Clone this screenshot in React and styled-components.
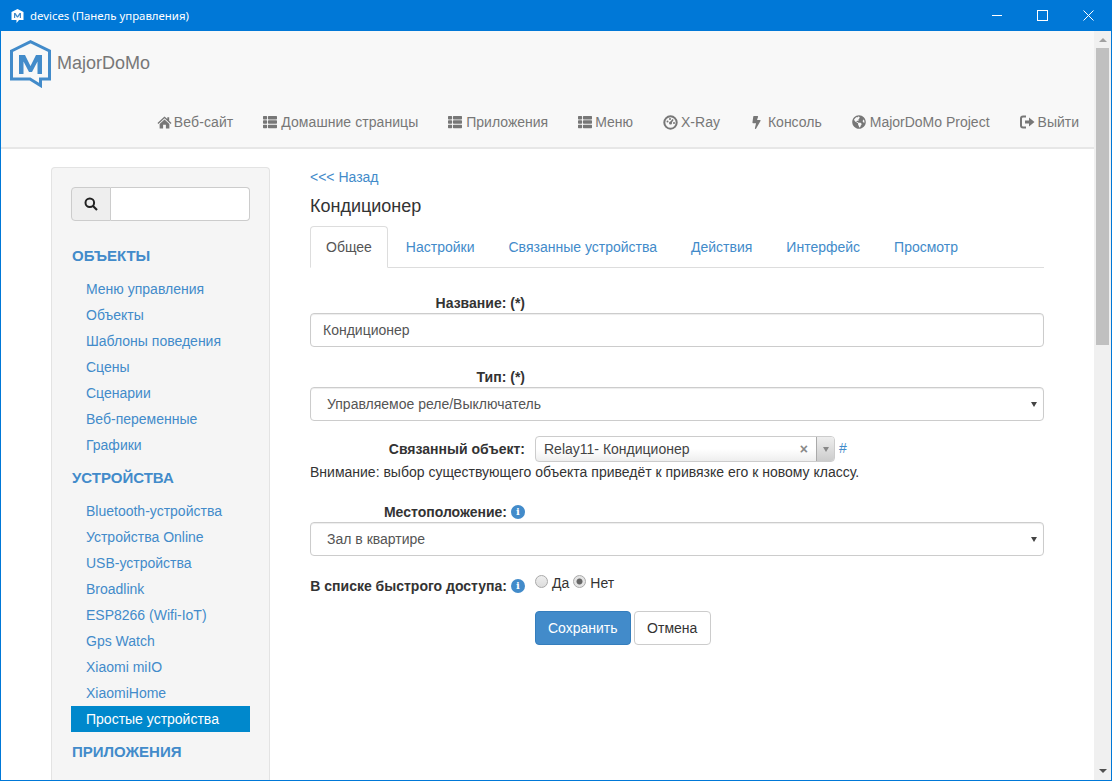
import React from 'react';
import styled, { createGlobalStyle } from 'styled-components';
import { FaThList, FaBolt, FaGlobeAmericas } from 'react-icons/fa';

const Global = createGlobalStyle`
  html, body { margin: 0; padding: 0; height: 100%; overflow: hidden; }
  body { font-family: "Liberation Sans", Arial, sans-serif; font-size: 14px; line-height: 20px; color: #333; background: #fff; }
  * { box-sizing: border-box; }
  a { text-decoration: none; color: #428bca; }
`;

const Win = styled.div`
  width: 1112px; height: 781px; display: flex; flex-direction: column;
  border: 1px solid #0078d7; border-top: 0; overflow: hidden;
`;
const TitleBar = styled.div`
  height: 31px; flex: none; background: #0078d7; color: #fff; display: flex; align-items: center;
  margin: 0 -1px; padding: 0 1px 0 11px; font-family: "Noto Sans", "Open Sans", sans-serif; font-size: 11.4px;
`;
const TitleText = styled.span` margin-left: 6px; flex: 1; `;
const WinBtn = styled.div` width: 46px; height: 31px; display: flex; align-items: center; justify-content: center; `;
const Main = styled.div` flex: 1; display: flex; min-height: 0; `;
const Page = styled.div` flex: 1; min-width: 0; overflow: hidden; `;
const ScrollBar = styled.div`
  width: 17px; flex: none; background: #f0f0f0; display: flex; flex-direction: column; align-items: center;
`;
const ArrowUp = styled.div` width: 0; height: 0; margin-top: 7px; border: 4px solid transparent; border-top: 0; border-bottom: 4px solid #a0a0a0; `;
const Thumb = styled.div` width: 13px; height: 297px; background: #c0c0c0; margin-top: 6px; flex: none; `;
const ArrowDown = styled.div` width: 0; height: 0; margin-top: auto; margin-bottom: 7px; border: 4px solid transparent; border-bottom: 0; border-top: 4px solid #505050; `;

const Navbar = styled.div` height: 118px; background: #f8f8f8; border-bottom: 2px solid #e7e7e7; display: flex; flex-direction: column; `;
const Brand = styled.div` display: flex; height: 60px; padding: 9px 0 0 9px; `;
const BrandName = styled.span` font-size: 18px; color: #777; margin: 11px 0 0 5px; line-height: 24px; `;
const NavList = styled.div` display: flex; justify-content: flex-end; margin-top: 20px; `;
const NavItem = styled.a`
  display: flex; align-items: center; color: #777; padding: 0 15px; height: 22px; white-space: nowrap; line-height: 20px;
  letter-spacing: ${p => p.$ls || 0}px;
  svg { margin-right: ${p => p.$gap ?? 3}px; flex: none; }
`;

const Body = styled.div` display: flex; padding: 18px 0 0 50px; align-items: flex-start; `;
const Sidebar = styled.div`
  width: 219px; flex: none; background: #f5f5f5; border: 1px solid #e3e3e3; border-bottom: 0; border-radius: 4px 4px 0 0; padding: 19px 19px 12px; height: 640px;
`;
const SearchGroup = styled.div` display: flex; height: 34px; margin-bottom: 22px; `;
const SearchAddon = styled.div` width: 40px; background: #eee; border: 1px solid #ccc; border-radius: 4px 0 0 4px; display: flex; align-items: center; justify-content: center; `;
const SearchInput = styled.div` flex: 1; background: #fff; border: 1px solid #ccc; border-left: 0; border-radius: 0 4px 4px 0; `;
const NavHead = styled.div` font-size: 15px; font-weight: 700; color: #428bca; line-height: 20px; padding: 3px 1px; margin-bottom: 7px; `;
const SideLink = styled.a`
  display: block; height: 26px; line-height: 20px; padding: 3px 15px; color: ${p => p.$active ? '#fff' : '#428bca'}; background: ${p => p.$active ? '#0088cc' : 'transparent'};
`;
const SideGroup = styled.div` margin-bottom: 7px; `;

const Content = styled.div` width: 734px; margin-left: 40px; flex: none; `;
const Back = styled.a` display: block; line-height: 20px; `;
const Heading = styled.h4` margin: 9px 0 0; font-size: 18px; font-weight: 400; line-height: 20px; color: #333; `;
const Tabs = styled.div` display: flex; height: 42px; margin-top: 10px; border-bottom: 1px solid #ddd; `;
const Tab = styled.a`
  height: 42px; padding: 10px 15px; margin-right: 2px; line-height: 20px; border: 1px solid ${p => p.$active ? '#ddd' : 'transparent'}; border-bottom-color: ${p => p.$active ? '#fff' : 'transparent'};
  border-radius: 4px 4px 0 0; background: ${p => p.$active ? '#fff' : 'transparent'}; color: ${p => p.$active ? '#555' : '#428bca'};
`;
const Label = styled.div` width: 215px; font-weight: 700; line-height: 20px; margin-top: ${p => p.$mt || 0}px; color: #333; white-space: nowrap; display: flex; justify-content: flex-end; align-items: center; gap: 4px; flex: none; `;
const Control = styled.div`
  height: 34px; border: 1px solid #ccc; border-radius: 4px; background: #fff; color: #555; line-height: 32px; padding: 0 12px; position: relative;
  box-shadow: inset 0 1px 1px rgba(0,0,0,.075);
`;
const SelectControl = styled(Control)` padding-left: 16px; `;
const Caret = styled.span` position: absolute; right: 6px; top: 14px; width: 0; height: 0; border: 3.5px solid transparent; border-bottom: 0; border-top: 5px solid #444; `;
const InlineRow = styled.div` display: flex; margin-top: ${p => p.$mt || 0}px; align-items: center; `;
const Select2 = styled.div`
  width: 300px; height: 26px; margin-left: 10px; border: 1px solid #ccc; border-radius: 4px; display: flex; line-height: 24px; padding-left: 8px; color: #444;
  background: linear-gradient(#fff 50%, #eee); overflow: hidden; flex: none;
`;
const S2Text = styled.span` flex: 1; `;
const S2Clear = styled.span` font-weight: 700; color: #888; font-size: 14px; margin-right: 8px; `;
const S2Arrow = styled.div` width: 18px; background: linear-gradient(#eee, #ccc); border-left: 1px solid #aaa; display: flex; align-items: center; justify-content: center; `;
const S2Tri = styled.span` width: 0; height: 0; border: 3px solid transparent; border-bottom: 0; border-top: 5px solid #888; `;
const Hash = styled.a` margin: -3px 0 0 4px; `;
const Note = styled.div` line-height: 20px; `;
const Info = styled.span`
  width: 14px; height: 14px; border-radius: 50%; background: #428bca; color: #fff; font-size: 10px; font-weight: 700; line-height: 14px; text-align: center; display: inline-block; flex: none; font-family: "DejaVu Serif", serif;
`;
const Radios = styled.div` display: flex; align-items: center; margin-left: 10px; margin-top: -6px; color: #333; `;
const Radio = styled.span`
  width: 13px; height: 13px; border-radius: 50%; border: 1px solid #a9a9a9; background: ${p => p.$on ? 'radial-gradient(circle, #666 0 2.6px, #e4e4e4 3.4px)' : 'linear-gradient(#eee,#ddd)'}; display: inline-block; margin: -4px 4px 0 ${p => p.$ml || 0}px;
`;
const Actions = styled.div` display: flex; margin: 15px 0 0 225px; gap: 3px; `;
const Btn = styled.a`
  height: 34px; padding: 6px ${p => p.$primary ? 12 : 13}px 6px ${p => p.$primary ? 12 : 12.5}px; border-radius: 4px; line-height: 20px; border: 1px solid ${p => p.$primary ? '#357ebd' : '#ccc'}; background: ${p => p.$primary ? '#428bca' : '#fff'}; color: ${p => p.$primary ? '#fff' : '#333'};
`;

const Logo = () => (
  <svg width="42" height="48" viewBox="0 0 42 48" style={{ flex: 'none' }}>
    <path d="M1.5 11 L20.5 1.7 L39.5 11 V39 H30.5 V45.5 L20 39 H1.5 Z" fill="none" stroke="#428bca" strokeWidth="3" />
    <path d="M9 34 V15 H15 L20.5 26 L26 15 H32 V34 H27.5 V21.5 L22 32 H19 L13.5 21.5 V34 Z" fill="#428bca" />
  </svg>
);
const Home = () => (
  <svg width="15" height="15" viewBox="0 0 16 15"><path d="M8 1 L0.5 8 L1.5 9 L8 3 L14.5 9 L15.5 8 L13 5.6 V2 H11 V3.8 Z" fill="#777" /><path d="M2.8 9 L8 4.2 L13.2 9 V14 H9.5 V10 H6.5 V14 H2.8 Z" fill="#777" /></svg>
);
const Dash = () => (
  <svg width="15" height="15" viewBox="0 0 15 15"><circle cx="7.5" cy="7.5" r="6.2" fill="none" stroke="#777" strokeWidth="2" /><path d="M7.5 8 L10 4.5" stroke="#777" strokeWidth="1.5" /><circle cx="4.5" cy="6.5" r="1" fill="#777" /><circle cx="7" cy="4" r="1" fill="#777" /><circle cx="11" cy="8" r="1" fill="#777" /><circle cx="7.5" cy="8" r="1.5" fill="#777" /></svg>
);
const LogOut = () => (
  <svg width="15" height="14" viewBox="0 0 15 14"><path d="M6 1.5 H3 Q1 1.5 1 3.5 V10.5 Q1 12.5 3 12.5 H6" fill="none" stroke="#777" strokeWidth="2" /><path d="M5 5.5 H9 V2.5 L14.5 7 L9 11.5 V8.5 H5 Z" fill="#777" /></svg>
);
const Search = () => (
  <svg width="14" height="14" viewBox="0 0 14 14"><circle cx="5.8" cy="5.8" r="4.3" fill="none" stroke="#222" strokeWidth="2" /><path d="M9 9 L13 13" stroke="#222" strokeWidth="2.2" /></svg>
);

const objects = ['Меню управления','Объекты','Шаблоны поведения','Сцены','Сценарии','Веб-переменные','Графики'];
const devices = ['Bluetooth-устройства','Устройства Online','USB-устройства','Broadlink','ESP8266 (Wifi-IoT)','Gps Watch','Xiaomi miIO','XiaomiHome'];

export default function App() {
  return (
    <Win>
      <Global />
      <TitleBar>
        <svg width="13" height="14" viewBox="0 0 13 14"><path d="M0.5 3 L6.5 0 L12.5 3 V11 H8 L5.5 14 V11 H0.5 Z" fill="#fff" /><path d="M3 9 V4 H4.5 L6.5 7 L8.5 4 H10 V9 H8.8 V6 L7 8.5 H6 L4.2 6 V9 Z" fill="#428bca" /></svg>
        <TitleText>devices (Панель управления)</TitleText>
        <WinBtn><svg width="14" height="11"><path d="M3 5.5 H13" stroke="#fff" /></svg></WinBtn>
        <WinBtn><svg width="11" height="11"><rect x=".5" y=".5" width="10" height="10" fill="none" stroke="#fff" /></svg></WinBtn>
        <WinBtn><svg width="11" height="11"><path d="M.5 .5 L10.5 10.5 M10.5 .5 L.5 10.5" stroke="#fff" /></svg></WinBtn>
      </TitleBar>
      <Main>
        <Page>
          <Navbar>
            <Brand>
              <Logo />
              <BrandName>MajorDoMo</BrandName>
            </Brand>
            <NavList>
              <NavItem $gap={2} $ls={0.1}><Home />Веб-сайт</NavItem>
              <NavItem $gap={4} $ls={0.06}><FaThList size={14} color="#777" />Домашние страницы</NavItem>
              <NavItem $gap={4}><FaThList size={14} color="#777" />Приложения</NavItem>
              <NavItem $gap={3}><FaThList size={14} color="#777" />Меню</NavItem>
              <NavItem><Dash />X-Ray</NavItem>
              <NavItem $gap={5}><FaBolt size={13} color="#777" />Консоль</NavItem>
              <NavItem $gap={4}><FaGlobeAmericas size={14} color="#777" />MajorDoMo Project</NavItem>
              <NavItem><LogOut />Выйти</NavItem>
            </NavList>
          </Navbar>
          <Body>
            <Sidebar>
              <SearchGroup>
                <SearchAddon><Search /></SearchAddon>
                <SearchInput />
              </SearchGroup>
              <NavHead>ОБЪЕКТЫ</NavHead>
              <SideGroup>{objects.map(o => <SideLink key={o}>{o}</SideLink>)}</SideGroup>
              <NavHead>УСТРОЙСТВА</NavHead>
              <SideGroup>
                {devices.map(o => <SideLink key={o}>{o}</SideLink>)}
                <SideLink $active>Простые устройства</SideLink>
              </SideGroup>
              <NavHead>ПРИЛОЖЕНИЯ</NavHead>
            </Sidebar>
            <Content>
              <Back>&lt;&lt;&lt; Назад</Back>
              <Heading>Кондиционер</Heading>
              <Tabs>
                <Tab $active>Общее</Tab>
                <Tab>Настройки</Tab>
                <Tab>Связанные устройства</Tab>
                <Tab>Действия</Tab>
                <Tab>Интерфейс</Tab>
                <Tab>Просмотр</Tab>
              </Tabs>
              <Label $mt={25}>Название: (*)</Label>
              <Control>Кондиционер</Control>
              <Label $mt={20}>Тип: (*)</Label>
              <SelectControl>Управляемое реле/Выключатель<Caret /></SelectControl>
              <InlineRow $mt={15}>
                <Label>Связанный объект:</Label>
                <Select2>
                  <S2Text>Relay11- Кондиционер</S2Text>
                  <S2Clear>×</S2Clear>
                  <S2Arrow><S2Tri /></S2Arrow>
                </Select2>
                <Hash>#</Hash>
              </InlineRow>
              <Note>Внимание: выбор существующего объекта приведёт к привязке его к новому классу.</Note>
              <Label $mt={20}>Местоположение: <Info>i</Info></Label>
              <SelectControl>Зал в квартире<Caret /></SelectControl>
              <InlineRow $mt={20}>
                <Label>В списке быстрого доступа: <Info>i</Info></Label>
                <Radios><Radio />Да<Radio $on $ml={4} />Нет</Radios>
              </InlineRow>
              <Actions>
                <Btn $primary>Сохранить</Btn>
                <Btn>Отмена</Btn>
              </Actions>
            </Content>
          </Body>
        </Page>
        <ScrollBar>
          <ArrowUp />
          <Thumb />
          <ArrowDown />
        </ScrollBar>
      </Main>
    </Win>
  );
}
